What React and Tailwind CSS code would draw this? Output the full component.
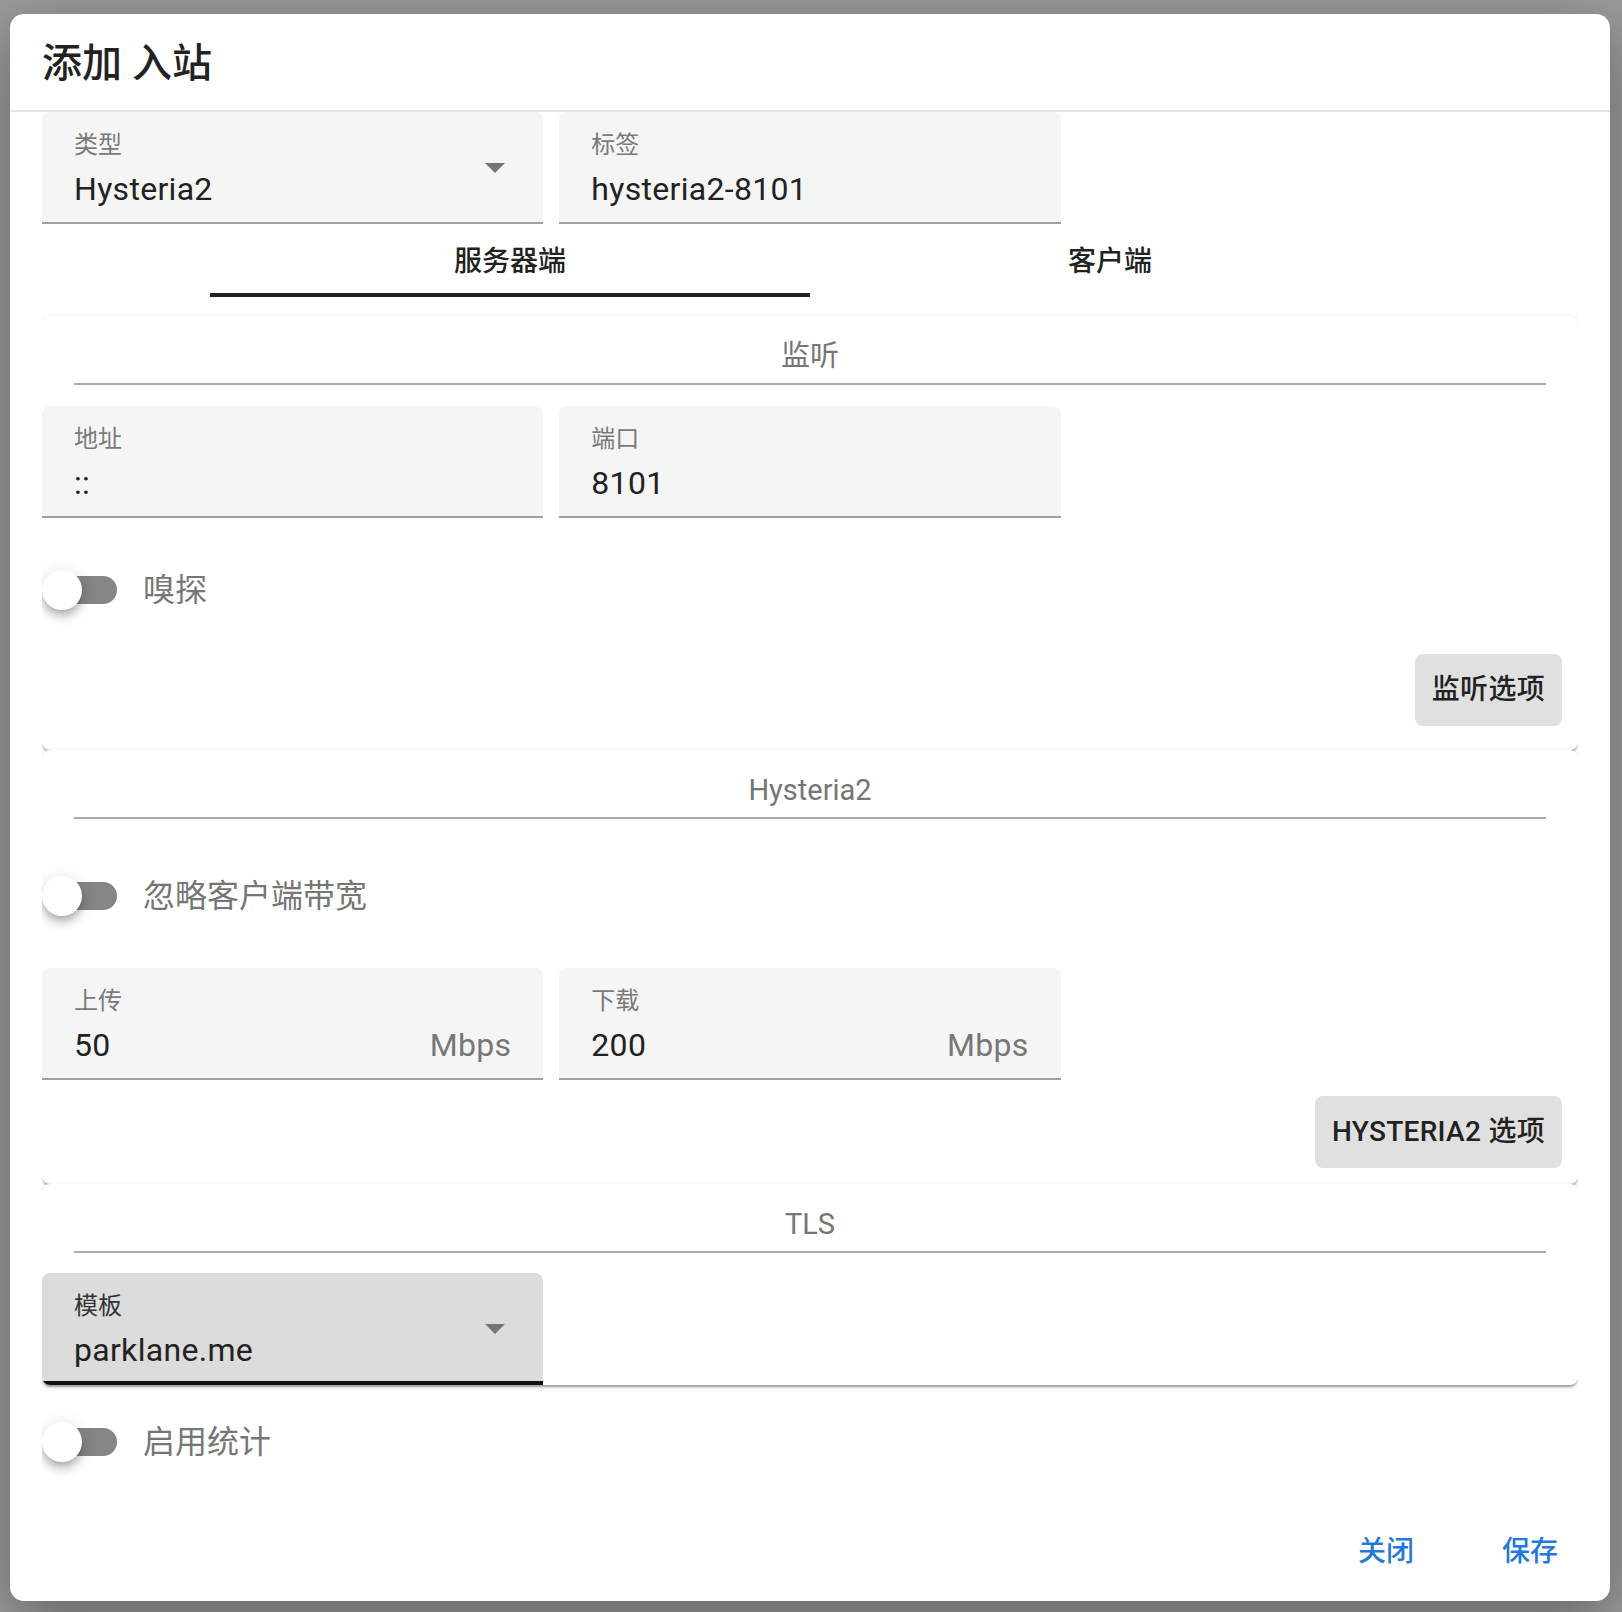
import React from 'react';

const CARD_SHADOW =
  'shadow-[0_4px_2px_-2px_rgba(0,0,0,0.2),0_2px_2px_0_rgba(0,0,0,0.14),0_2px_6px_0_rgba(0,0,0,0.12)]';

function Field({ label, value, suffix, select, focused }) {
  return (
    <div
      className={`relative h-[112px] rounded-t-[8px] px-[32px] ${
        focused ? 'border-b-[4px] border-[#111] bg-[#dcdcdc]' : 'border-b-2 border-[#a0a0a0] bg-[#f5f5f5]'
      }`}
    >
      <div className={`pt-[20px] text-[24px] leading-[26px] ${focused ? 'text-[#333]' : 'text-[#7a7a7a]'}`}>
        {label}
      </div>
      <div className="mt-[11px] flex items-center justify-between text-[32px] leading-[40px] tracking-[0.3px]">
        <span className="text-[#222]">{value}</span>
        {suffix && <span className="text-[#777]">{suffix}</span>}
      </div>
      {select && (
        <svg className="absolute right-[38px] top-[51px]" width="20" height="10" viewBox="0 0 20 10">
          <path d="M0 0h20L10 10z" fill="#757575" />
        </svg>
      )}
    </div>
  );
}

function Toggle({ label }) {
  return (
    <div className="flex h-[40px] items-center">
      <div className="relative h-[40px] w-[76px] shrink-0">
        <div className="absolute left-[3px] top-[6px] h-[28px] w-[72px] rounded-full bg-[#858585]" />
        <div className="absolute left-0 top-0 h-[40px] w-[40px] rounded-full bg-white shadow-[0_4px_6px_-2px_rgba(0,0,0,0.2),0_8px_10px_0_rgba(0,0,0,0.14),0_2px_18px_0_rgba(0,0,0,0.12)]" />
      </div>
      <span className="ml-[25px] text-[32px] leading-[40px] text-[#767676]">{label}</span>
    </div>
  );
}

function Section({ title, className = '', children }) {
  return (
    <div className={`rounded-[8px] bg-white ${CARD_SHADOW} ${className}`}>
      <div className="px-[32px]">
        <div className="border-b-2 border-[#ababab] pb-[11px] pt-[24px] text-center text-[29px] leading-[32px] text-[#767676]">
          {title}
        </div>
      </div>
      {children}
    </div>
  );
}

function OptionButton({ children }) {
  return (
    <div className="flex justify-end pr-[16px]">
      <button className="h-[72px] rounded-[8px] bg-[#e0e0e0] px-[17px] text-[28px] font-medium tracking-[0.3px] text-[#222]">
        {children}
      </button>
    </div>
  );
}

export default function App() {
  return (
    <div className="min-h-[1612px] w-full bg-[#9a9a9a] pl-[10px] pt-[14px] font-['Roboto','Noto_Sans_CJK_SC',sans-serif]">
      <div className="flex h-[1587px] w-[1600px] flex-col overflow-hidden rounded-[14px] bg-white shadow-[0_18px_60px_rgba(0,0,0,0.35)]">
        {/* Title */}
        <div className="flex h-[98px] shrink-0 items-center border-b-2 border-[#e5e5e5] px-[32px] pt-[4px] text-[40px] font-medium text-[#222]">
          添加 入站
        </div>

        {/* Type / tag */}
        <div className="grid grid-cols-3 gap-x-[16px] px-[32px]">
          <Field label="类型" value="Hysteria2" select />
          <Field label="标签" value="hysteria2-8101" />
        </div>

        {/* Tabs */}
        <div className="flex h-[73px] justify-center text-[28px] font-medium text-[#222]">
          <div className="relative flex w-[600px] items-center justify-center pt-[3px]">
            服务器端
            <div className="absolute bottom-0 left-0 right-0 h-[4px] bg-[#222]" />
          </div>
          <div className="flex w-[600px] items-center justify-center pt-[3px]">客户端</div>
        </div>

        {/* Window */}
        <div className="mx-[32px] overflow-hidden pb-[20px] pt-[19px]">
          <Section title="监听">
            <div className="mt-[21px] grid grid-cols-3 gap-x-[16px]">
              <Field label="地址" value="::" />
              <Field label="端口" value="8101" />
            </div>
            <div className="mt-[52px]">
              <Toggle label="嗅探" />
            </div>
            <div className="mt-[44px] pb-[24px]">
              <OptionButton>监听选项</OptionButton>
            </div>
          </Section>

          <Section title="Hysteria2">
            <div className="mt-[57px]">
              <Toggle label="忽略客户端带宽" />
            </div>
            <div className="mt-[52px] grid grid-cols-3 gap-x-[16px]">
              <Field label="上传" value="50" suffix="Mbps" />
              <Field label="下载" value="200" suffix="Mbps" />
            </div>
            <div className="mt-[16px] pb-[16px]">
              <OptionButton>HYSTERIA2 选项</OptionButton>
            </div>
          </Section>

          <Section title="TLS" className="overflow-hidden">
            <div className="mt-[20px] grid grid-cols-3 gap-x-[16px]">
              <Field label="模板" value="parklane.me" select focused />
            </div>
          </Section>

          <div className="mt-[37px]">
            <Toggle label="启用统计" />
          </div>
        </div>

        {/* Actions */}
        <div className="mt-auto flex justify-end gap-[16px] px-[16px] pb-[13px]">
          <button className="h-[72px] min-w-[128px] rounded-[8px] px-[16px] text-[28px] font-medium text-[#2478da]">
            关闭
          </button>
          <button className="h-[72px] min-w-[128px] rounded-[8px] px-[16px] text-[28px] font-medium text-[#2478da]">
            保存
          </button>
        </div>
      </div>
    </div>
  );
}
